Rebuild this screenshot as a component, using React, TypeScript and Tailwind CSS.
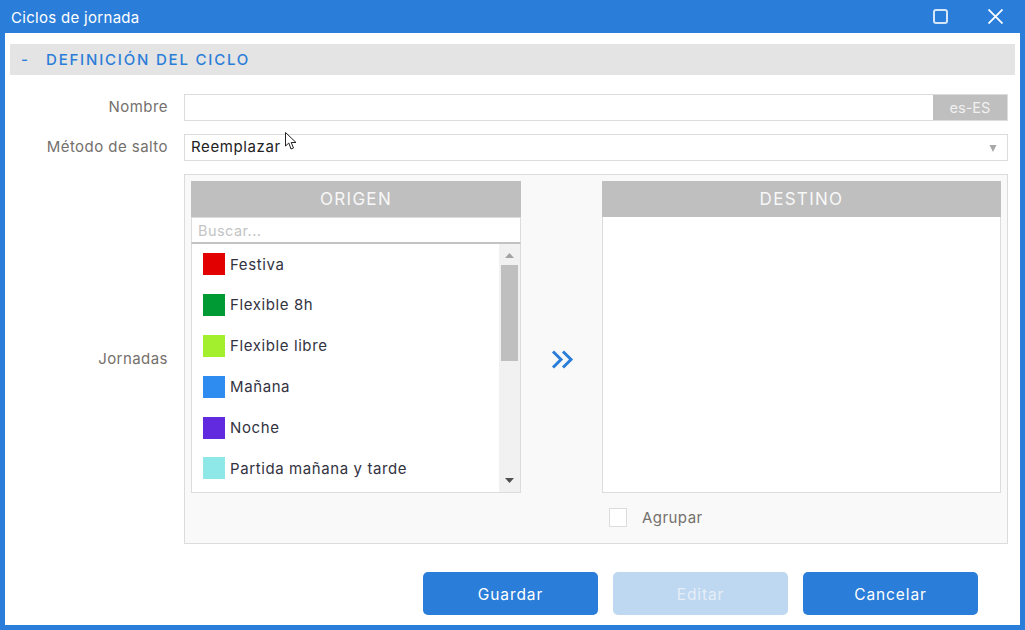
const jornadas = [
  { name: 'Festiva', color: 'bg-[#e30000]' },
  { name: 'Flexible 8h', color: 'bg-[#009a35]' },
  { name: 'Flexible libre', color: 'bg-[#a3ef2d]' },
  { name: 'Mañana', color: 'bg-[#2e8bef]' },
  { name: 'Noche', color: 'bg-[#622ade]' },
  { name: 'Partida mañana y tarde', color: 'bg-[#8fe8e8]' },
];

function ListHeader({ title }: { title: string }) {
  return (
    <div className="h-[36px] pt-[1px] shrink-0 bg-[#bfbfbf] text-[#f8f8f8] text-[17px] tracking-[1.3px] flex items-center justify-center">
      {title}
    </div>
  );
}

function ActionButton({ label, disabled }: { label: string; disabled?: boolean }) {
  return (
    <button
      className={
        disabled
          ? 'w-[175px] h-[43px] pt-[3px] rounded-[5px] bg-[#bfd8f1] text-[#e6eef7] text-[15.5px] tracking-[0.9px]'
          : 'w-[175px] h-[43px] pt-[3px] rounded-[5px] bg-[#2a7dd8] text-white text-[15.5px] tracking-[0.9px]'
      }
    >
      {label}
    </button>
  );
}

export default function App() {
  return (
    <div className="relative w-[1025px] h-[630px] flex flex-col bg-[#2a7dd8] font-['Inter',sans-serif] overflow-hidden">
      {/* title bar */}
      <div className="h-[33px] shrink-0 flex items-center pl-[11px] text-white text-[15px] tracking-[0.3px]">
        <span className="pt-[3px]">Ciclos de jornada</span>
        <div className="ml-auto flex items-center gap-[40px] pr-[22px]">
          <div className="w-[15px] h-[15px] rounded-[3px] border-2 border-[#d5e6f8]" />
          <svg width="15" height="15" viewBox="0 0 15 15" fill="none" stroke="white" strokeWidth="1.8">
            <path d="M0.5 0.5 14.5 14.5M14.5 0.5 0.5 14.5" />
          </svg>
        </div>
      </div>

      <div className="mx-[5px] mb-[5px] flex-1 bg-white px-[5px] pt-[11px] flex flex-col">
        <div className="h-[31px] pt-[1px] shrink-0 bg-[#e4e4e4] flex items-center pl-[11px] text-[#2a7dd8] text-[15px] font-medium">
          <span className="w-[25px]">-</span>
          <span className="tracking-[1.8px]">DEFINICIÓN DEL CICLO</span>
        </div>

        <div className="mt-[19px] pr-[7px] flex flex-col gap-[13px] text-[15px] tracking-[0.45px] text-[#74706c]">
          <div className="flex items-center gap-[16px]">
            <label className="w-[158px] text-right">Nombre</label>
            <div className="flex-1 h-[27px] border border-[#dcdcdc] flex">
              <input className="flex-1 min-w-0 outline-none bg-white" />
              <div className="w-[74px] bg-[#bfbfbf] text-[#f1f1f1] text-[14.5px] tracking-normal flex items-center justify-center">es-ES</div>
            </div>
          </div>

          <div className="flex items-center gap-[16px]">
            <label className="w-[158px] text-right">Método de salto</label>
            <div className="flex-1 h-[27px] border border-[#dcdcdc] flex items-center pl-[6px] pr-[10px] text-[#222222]">
              <span className="tracking-[0.6px]">Reemplazar</span>
              <svg className="ml-auto" width="8" height="8" viewBox="0 0 8 8" fill="#a8a8a8">
                <path d="M0.5 1h7L4 8z" />
              </svg>
            </div>
          </div>

          <div className="flex items-center gap-[16px]">
            <label className="w-[158px] text-right">Jornadas</label>
            <div className="flex-1 h-[370px] border border-[#dcdcdc] bg-[#f9f9f9] p-[6px] flex">
              <div className="w-[330px] h-[312px] flex flex-col">
                <ListHeader title="ORIGEN" />
                <input
                  placeholder="Buscar..."
                  className="h-[27px] shrink-0 border border-[#dcdcdc] border-b-[#c2c2c2] border-b-2 bg-white px-[6px] text-[14.5px] outline-none placeholder:text-[#c4c4c4]"
                />
                <div className="flex-1 min-h-0 border border-t-0 border-[#dcdcdc] bg-white flex">
                  <div className="flex-1 overflow-hidden pl-[11px]">
                    {jornadas.map((j) => (
                      <div key={j.name} className="h-[40.8px] flex items-center gap-[5px] text-[#33333f] tracking-[0.6px]">
                        <div className={`w-[22px] h-[22px] ${j.color}`} />
                        <span className="pt-[1px]">{j.name}</span>
                      </div>
                    ))}
                  </div>
                  <div className="w-[21px] shrink-0 bg-[#f1f1f1] flex flex-col items-center">
                    <svg className="mt-[9px]" width="9" height="5" viewBox="0 0 9 5" fill="#a3a3a3">
                      <path d="M4.5 0 9 5H0z" />
                    </svg>
                    <div className="mt-[7px] w-[17px] h-[96px] bg-[#bfbfbf]" />
                    <svg className="mt-auto mb-[9px]" width="9" height="5" viewBox="0 0 9 5" fill="#505050">
                      <path d="M0 0h9L4.500 5z" />
                    </svg>
                  </div>
                </div>
              </div>

              <div className="w-[81px] flex items-center justify-center">
                <svg className="ml-[2px]" width="23" height="19" viewBox="0 0 23 19" fill="none" stroke="#2a7dd8" strokeWidth="3">
                  <path d="M2 1.500 10 9.500 2 17.500M12 1.500 20 9.500 12 17.500" />
                </svg>
              </div>

              <div className="w-[399px] flex flex-col">
                <ListHeader title="DESTINO" />
                <div className="h-[276px] border border-t-0 border-[#dcdcdc] bg-white" />
                <div className="mt-[13px] pl-[7px] flex items-center gap-[15px] text-[#74706c]">
                  <div className="w-[18px] h-[19px] border border-[#dcdcdc] bg-white" />
                  <span className="pt-[1px]">Agrupar</span>
                </div>
              </div>
            </div>
          </div>
        </div>

        <div className="mt-[28px] pr-[37px] flex justify-end gap-[15px]">
          <ActionButton label="Guardar" />
          <ActionButton label="Editar" disabled />
          <ActionButton label="Cancelar" />
        </div>
      </div>

      {/* mouse pointer over the page */}
      <svg className="absolute left-[285px] top-[132px]" width="13" height="19" viewBox="0 0 13 19" fill="white" stroke="#222222" strokeWidth="1">
        <path d="M0.500 0.500V14L3.800 11 6 17 8.500 16 6.200 10.500H11z" />
      </svg>
    </div>
  );
}
